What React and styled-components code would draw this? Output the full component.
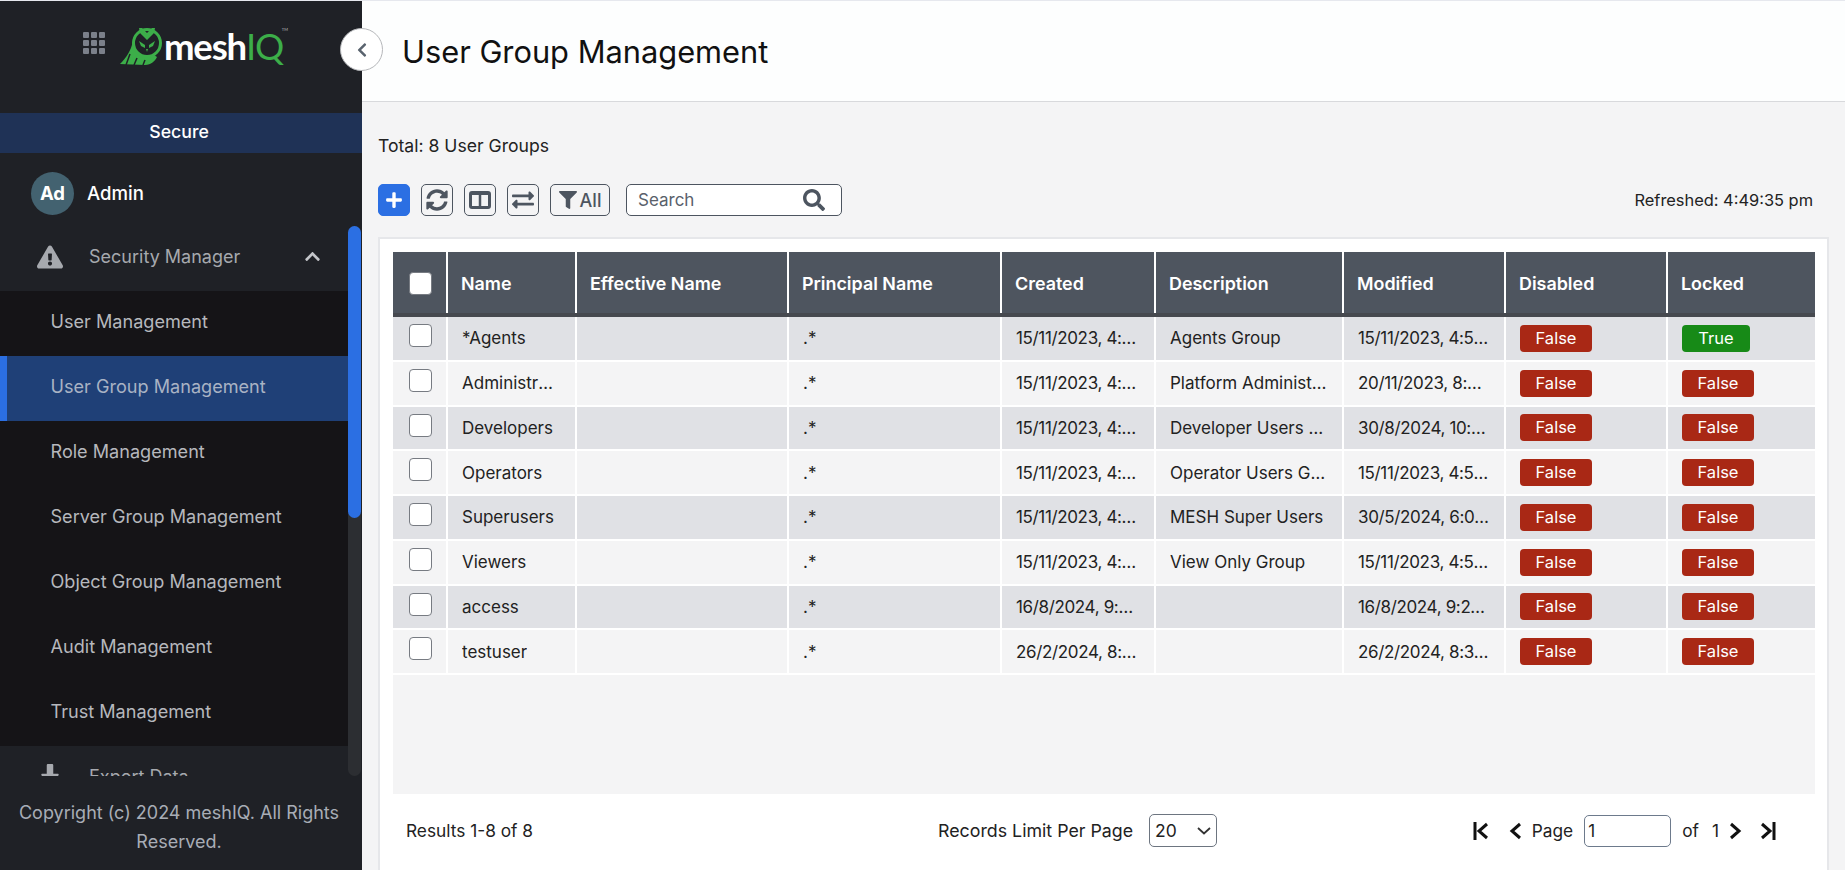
import React from 'react';
import styled, { createGlobalStyle } from 'styled-components';
import {
  FaPlus,
  FaSyncAlt,
  FaExchangeAlt,
  FaFilter,
  FaSearch,
  FaExclamationTriangle,
  FaChevronUp,
  FaChevronLeft,
  FaDownload,
} from 'react-icons/fa';

const GRID = '55px 129px 212px 213px 154px 188px 162px 162px 146px';

const menuItems = [
  'User Management',
  'User Group Management',
  'Role Management',
  'Server Group Management',
  'Object Group Management',
  'Audit Management',
  'Trust Management',
];

const columns = ['Name', 'Effective Name', 'Principal Name', 'Created', 'Description', 'Modified', 'Disabled', 'Locked'];

const rows = [
  { name: '*Agents', created: '15/11/2023, 4:53:21 pm', desc: 'Agents Group', modified: '15/11/2023, 4:53:21 pm', locked: true },
  { name: 'Administrators', created: '15/11/2023, 4:53:21 pm', desc: 'Platform Administrators', modified: '20/11/2023, 8:42:40 am' },
  { name: 'Developers', created: '15/11/2023, 4:53:21 pm', desc: 'Developer Users Group', modified: '30/8/2024, 10:21:05 am' },
  { name: 'Operators', created: '15/11/2023, 4:53:21 pm', desc: 'Operator Users Group', modified: '15/11/2023, 4:53:21 pm' },
  { name: 'Superusers', created: '15/11/2023, 4:53:21 pm', desc: 'MESH Super Users', modified: '30/5/2024, 6:02:11 pm' },
  { name: 'Viewers', created: '15/11/2023, 4:53:21 pm', desc: 'View Only Group', modified: '15/11/2023, 4:53:21 pm' },
  { name: 'access', created: '16/8/2024, 9:24:33 am', desc: '', modified: '16/8/2024, 9:24:33 am' },
  { name: 'testuser', created: '26/2/2024, 8:31:17 pm', desc: '', modified: '26/2/2024, 8:31:17 pm' },
];

const Global = createGlobalStyle`
  html, body {
    margin: 0;
    padding: 0;
    height: 100%;
    overflow: hidden;
  }
  body {
    font-family: Inter, "Liberation Sans", sans-serif;
    background: #f4f4f5;
  }
`;

const Page = styled.div`
  display: flex;
  height: 870px;
  border-top: 1px solid #e6e8ee;
  box-sizing: border-box;
  position: relative;
`;

const Sidebar = styled.aside`
  width: 362px;
  flex: none;
  display: flex;
  flex-direction: column;
  background: #1f2126;
`;

const LogoBar = styled.div`
  height: 112px;
  flex: none;
  display: flex;
  align-items: flex-start;
  padding: 26px 0 0 83px;
  box-sizing: border-box;
`;

const AppGrid = styled.div`
  display: grid;
  grid-template-columns: repeat(3, 6px);
  grid-auto-rows: 6px;
  gap: 2px;
  margin: 5px 14px 0 0;
  span {
    background: #7b808a;
    border-radius: 1px;
  }
`;

const LogoText = styled.div`
  display: flex;
  align-items: baseline;
  margin-left: 1px;
  font-size: 36.5px;
  line-height: 38px;
  font-weight: 700;
  letter-spacing: -1.2px;
  color: #fff;
  font-family: Lato, sans-serif;
  position: relative;
  b {
    font-weight: 400;
    color: #3cae49;
  }
  sup {
    position: absolute;
    right: -5px;
    top: 1px;
    font-size: 4px;
    line-height: 4px;
    letter-spacing: 0;
    font-weight: 400;
    color: #bbb;
  }
`;

const EnvBar = styled.div`
  height: 40px;
  flex: none;
  box-sizing: border-box;
  background: #1f3256;
  color: #fff;
  display: flex;
  align-items: center;
  justify-content: center;
  padding: 0 4px 4px 0;
  font-size: 17.7px;
  font-weight: 500;
`;

const MenuArea = styled.div`
  flex: 1;
  min-height: 0;
  overflow: hidden;
  position: relative;
  padding-right: 14px;
`;

const UserRow = styled.div`
  height: 73px;
  box-sizing: border-box;
  display: flex;
  align-items: center;
  padding: 7px 0 0 31px;
  gap: 13px;
  color: #fff;
  font-size: 18.6px;
  font-weight: 500;
`;

const UserName = styled.span`
  padding-bottom: 1px;
`;

const Avatar = styled.div`
  width: 43px;
  height: 43px;
  border-radius: 50%;
  background: #436270;
  color: #fff;
  font-weight: 700;
  font-size: 18.5px;
  display: flex;
  align-items: center;
  justify-content: center;
`;

const SectionRow = styled.div`
  height: 65px;
  box-sizing: border-box;
  display: flex;
  align-items: center;
  color: #a6a9ae;
  font-size: 18px;
  padding: 0 0 4px 37px;
  svg:first-child {
    width: 26px;
    height: 26px;
    margin-right: 26px;
    flex: none;
  }
`;

const SectionChevron = styled(FaChevronUp)`
  margin-left: auto;
  margin-right: 27px;
  font-size: 17px;
  color: #c4c6ca;
`;

const SubMenu = styled.nav`
  background: #151417;
`;

const MenuItem = styled.div`
  height: 65px;
  display: flex;
  align-items: center;
  box-sizing: border-box;
  padding: 0 0 6px ${(p) => (p.$active ? '43.5px' : '50.5px')};
  font-size: 18.1px;
  color: ${(p) => (p.$active ? '#a9b3c4' : '#b6b8bd')};
  background: ${(p) => (p.$active ? '#1f4077' : 'transparent')};
  border-left: ${(p) => (p.$active ? '7px solid #2b6fe3' : 'none')};
`;

const ScrollTrack = styled.div`
  position: absolute;
  right: 1px;
  top: 73px;
  bottom: 0;
  width: 13px;
  border-radius: 7px;
  background: #2c2e32;
`;

const ScrollThumb = styled.div`
  height: 292px;
  border-radius: 7px;
  background: #2b6fe3;
`;

const SideFooter = styled.div`
  height: 94px;
  flex: none;
  box-sizing: border-box;
  padding: 22px 8px 0 4px;
  text-align: center;
  color: #a8adb6;
  font-size: 18px;
  line-height: 29px;
`;

const Main = styled.main`
  flex: 1;
  min-width: 0;
  display: flex;
  flex-direction: column;
`;

const TopBar = styled.header`
  height: 101px;
  flex: none;
  box-sizing: border-box;
  background: #fdfefe;
  border-bottom: 1px solid #d8d9dc;
  display: flex;
  align-items: center;
  padding-left: 40px;
`;

const Title = styled.h1`
  margin: 0;
  font-size: 30.8px;
  font-weight: 400;
  color: #111;
`;

const BackButton = styled.button`
  position: absolute;
  left: 340px;
  top: 27px;
  width: 43px;
  height: 43px;
  padding: 0;
  border-radius: 50%;
  border: 1px solid #b5b7ba;
  background: #fff;
  color: #59636e;
  display: flex;
  align-items: center;
  justify-content: center;
  font-size: 16px;
`;

const Content = styled.div`
  flex: 1;
  min-height: 0;
  display: flex;
  flex-direction: column;
  padding: 34px 16px 0;
`;

const Total = styled.div`
  font-size: 17.6px;
  line-height: 20px;
  color: #222;
`;

const Toolbar = styled.div`
  display: flex;
  align-items: center;
  margin-top: 28px;
  height: 32px;
`;

const IconButton = styled.button`
  height: 32px;
  min-width: ${(p) => (p.$wide ? '60px' : '32px')};
  box-sizing: border-box;
  padding: 0;
  margin-right: 11px;
  border-radius: 5px;
  border: 1px solid ${(p) => (p.$primary ? '#2b6fe3' : '#4d5560')};
  background: ${(p) => (p.$primary ? '#2b6fe3' : 'transparent')};
  color: ${(p) => (p.$primary ? '#fff' : '#4d5560')};
  display: flex;
  align-items: center;
  justify-content: center;
  gap: 3px;
  font: 500 18px Inter, sans-serif;
  svg {
    font-size: ${(p) => (p.$wide || p.$primary ? '18px' : '22px')};
  }
`;

const ColumnsIcon = () => (
  <svg width="22" height="20" viewBox="0 0 22 20" fill="none" stroke="currentColor" strokeWidth="3">
    <rect x="1.5" y="2.5" width="19" height="15" rx="1.5" />
    <path d="M11 3v14" strokeWidth="2.5" />
    <path d="M2 3.5h18" strokeWidth="3" />
  </svg>
);

const SearchBox = styled.div`
  width: 216px;
  height: 32px;
  box-sizing: border-box;
  margin-left: 5px;
  border: 1px solid #4d5560;
  border-radius: 5px;
  background: #fff;
  display: flex;
  align-items: center;
  padding: 0 16px 0 11px;
  color: #4d5560;
  svg {
    font-size: 22px;
    flex: none;
  }
`;

const SearchInput = styled.input`
  flex: 1;
  min-width: 0;
  border: none;
  outline: none;
  padding: 0;
  background: transparent;
  font: 17px Inter, sans-serif;
  &::placeholder {
    color: #59616b;
  }
`;

const Refreshed = styled.div`
  margin-left: auto;
  margin-right: 16px;
  font-size: 16.4px;
  color: #222;
`;

const Card = styled.section`
  flex: 1;
  min-height: 0;
  margin-top: 21px;
  background: #fff;
  border: 2px solid #e6e7ea;
  border-bottom: none;
  box-sizing: border-box;
  padding: 13px 12px 0 13px;
  display: flex;
  flex-direction: column;
`;

const TableArea = styled.div`
  height: 542px;
  flex: none;
  background: #f4f4f5;
`;

const HeadRow = styled.div`
  display: grid;
  grid-template-columns: ${GRID};
  height: 65px;
  background: #4e555f;
  border-bottom: 4px solid #46494f;
  box-sizing: border-box;
`;

const HeadCell = styled.div`
  display: flex;
  align-items: center;
  box-sizing: border-box;
  padding-left: 13px;
  padding-top: 2px;
  color: #fff;
  font-size: 17.9px;
  font-weight: 600;
  border-right: 2px solid #fff;
  &:last-child {
    border-right: none;
  }
`;

const BodyRow = styled.div`
  display: grid;
  grid-template-columns: ${GRID};
  height: 44.75px;
  box-sizing: border-box;
  border-bottom: 2px solid #fff;
  background: ${(p) => (p.$odd ? '#e0e1e5' : '#f4f4f5')};
`;

const BodyCell = styled.div`
  min-width: 0;
  box-sizing: border-box;
  padding: 0 14px 0;
  border-right: 2px solid #fff;
  display: flex;
  align-items: center;
  font-size: 17px;
  color: #222;
  &:last-child {
    border-right: none;
  }
`;

const CellText = styled.span`
  min-width: 0;
  overflow: hidden;
  white-space: nowrap;
  text-overflow: ellipsis;
`;

const DateText = styled(CellText)`
  letter-spacing: -0.35px;
`;

const CheckCell = styled(BodyCell)`
  align-items: flex-start;
  padding: 7px 0 0 16px;
`;

const HeadCheckCell = styled(HeadCell)`
  padding: 2px 0 0 16px;
`;

const Check = styled.input.attrs({ type: 'checkbox' })`
  appearance: none;
  margin: 0;
  width: 23px;
  height: 23px;
  background: #fff;
  border: 1px solid #777b82;
  border-radius: 4px;
`;

const Flag = styled.span`
  display: inline-flex;
  align-items: center;
  justify-content: center;
  width: ${(p) => (p.$on ? '68px' : '72px')};
  height: 27px;
  padding-bottom: 1px;
  box-sizing: border-box;
  border-radius: 4px;
  background: ${(p) => (p.$on ? '#178a17' : '#a92815')};
  color: #fff;
  font-size: 16.5px;
`;

const Pager = styled.div`
  flex: 1;
  display: flex;
  align-items: center;
  font-size: 17.3px;
  color: #222;
  padding: 0 0 3px 13px;
`;

const LimitGroup = styled.div`
  display: flex;
  align-items: center;
  gap: 16px;
  margin-left: 405px;
  font-size: 17.8px;
`;

const LimitSelect = styled.select`
  appearance: none;
  width: 68px;
  height: 33px;
  box-sizing: border-box;
  border: 1px solid #6d7580;
  border-radius: 5px;
  background: #fff url("data:image/svg+xml,%3Csvg xmlns='http://www.w3.org/2000/svg' width='14' height='8' viewBox='0 0 14 8'%3E%3Cpath d='M1 1l6 5.5L13 1' fill='none' stroke='%23333' stroke-width='1.8'/%3E%3C/svg%3E") no-repeat right 5px center;
  font: 17.5px Inter, sans-serif;
  color: #222;
  padding-left: 5px;
`;

const PageNav = styled.div`
  display: flex;
  align-items: center;
  margin-left: auto;
  margin-right: 39px;
`;

const PageIcon = styled.svg`
  width: 16px;
  height: 18px;
  margin: ${(p) => p.$margin};
  fill: none;
  stroke: #111;
  stroke-width: 3;
  flex: none;
`;

const PageInput = styled.input`
  width: 87px;
  height: 32px;
  box-sizing: border-box;
  margin: 0 11px 0 11px;
  padding: 0 3px;
  border: 1px solid #6d7a8c;
  border-radius: 5px;
  background: #fff;
  font: 17px Inter, sans-serif;
  color: #222;
`;

const OfGap = styled.span`
  width: 13px;
`;

const OwlLogo = () => (
  <svg width="44" height="38" viewBox="0 0 44 38">
    <path d="M14 14C12 24 7 31 1 37l25 1c6 0 10-4 12-8z" fill="#3cae49" />
    <path d="M11 27l-4 11M18 31l-3 7M26 33l-2 5" stroke="#1f2126" strokeWidth="1.5" />
    <circle cx="28" cy="16" r="13.5" fill="#1f2126" stroke="#3cae49" strokeWidth="3" />
    <path d="M20 1l3 0 5 5 5-5 3 0-1 5-7 7-7-7z" fill="#3cae49" />
    <path d="M20 14l6 4v3l-4-2zM36 14l-6 4v3l4-2z" fill="#3cae49" />
    <path d="M27 22h2l-1 3z" fill="#3cae49" />
  </svg>
);

const App = () => (
  <Page>
    <Global />
    <Sidebar>
      <LogoBar>
        <AppGrid>
          {Array.from({ length: 9 }, (_, i) => (
            <span key={i} />
          ))}
        </AppGrid>
        <OwlLogo />
        <LogoText>
          mesh<b>IQ</b>
          <sup>TM</sup>
        </LogoText>
      </LogoBar>
      <EnvBar>Secure</EnvBar>
      <MenuArea>
        <UserRow>
          <Avatar>Ad</Avatar>
          <UserName>Admin</UserName>
        </UserRow>
        <SectionRow>
          <FaExclamationTriangle />
          Security Manager
          <SectionChevron />
        </SectionRow>
        <SubMenu>
          {menuItems.map((item, i) => (
            <MenuItem key={item} $active={i === 1}>
              {item}
            </MenuItem>
          ))}
        </SubMenu>
        <SectionRow>
          <FaDownload />
          Export Data
        </SectionRow>
        <ScrollTrack>
          <ScrollThumb />
        </ScrollTrack>
      </MenuArea>
      <SideFooter>Copyright (c) 2024 meshIQ. All Rights Reserved.</SideFooter>
    </Sidebar>
    <BackButton>
      <FaChevronLeft />
    </BackButton>
    <Main>
      <TopBar>
        <Title>User Group Management</Title>
      </TopBar>
      <Content>
        <Total>Total: 8 User Groups</Total>
        <Toolbar>
          <IconButton $primary>
            <FaPlus />
          </IconButton>
          <IconButton>
            <FaSyncAlt />
          </IconButton>
          <IconButton>
            <ColumnsIcon />
          </IconButton>
          <IconButton>
            <FaExchangeAlt />
          </IconButton>
          <IconButton $wide>
            <FaFilter />
            All
          </IconButton>
          <SearchBox>
            <SearchInput placeholder="Search" />
            <FaSearch />
          </SearchBox>
          <Refreshed>Refreshed: 4:49:35 pm</Refreshed>
        </Toolbar>
        <Card>
          <TableArea>
            <HeadRow>
              <HeadCheckCell>
                <Check />
              </HeadCheckCell>
              {columns.map((c) => (
                <HeadCell key={c}>{c}</HeadCell>
              ))}
            </HeadRow>
            {rows.map((r, i) => (
              <BodyRow key={r.name} $odd={i % 2 === 0}>
                <CheckCell>
                  <Check />
                </CheckCell>
                <BodyCell>
                  <CellText>{r.name}</CellText>
                </BodyCell>
                <BodyCell />
                <BodyCell>
                  <CellText>.*</CellText>
                </BodyCell>
                <BodyCell>
                  <DateText>{r.created}</DateText>
                </BodyCell>
                <BodyCell>
                  <CellText>{r.desc}</CellText>
                </BodyCell>
                <BodyCell>
                  <DateText>{r.modified}</DateText>
                </BodyCell>
                <BodyCell>
                  <Flag>False</Flag>
                </BodyCell>
                <BodyCell>
                  <Flag $on={r.locked}>{r.locked ? 'True' : 'False'}</Flag>
                </BodyCell>
              </BodyRow>
            ))}
          </TableArea>
          <Pager>
            Results 1-8 of 8
            <LimitGroup>
              Records Limit Per Page
              <LimitSelect defaultValue="20">
                <option>10</option>
                <option>20</option>
                <option>50</option>
              </LimitSelect>
            </LimitGroup>
            <PageNav>
              <PageIcon viewBox="0 0 16 18" $margin="0 18px 0 0">
                <path d="M2 0v18M14 2L6 9l8 7" />
              </PageIcon>
              <PageIcon viewBox="0 0 16 18" $margin="0 9px 0 0">
                <path d="M13 2L5 9l8 7" />
              </PageIcon>
              Page
              <PageInput defaultValue="1" />
              of
              <OfGap />1
              <PageIcon viewBox="0 0 16 18" $margin="0 0 0 9px">
                <path d="M3 2l8 7-8 7" />
              </PageIcon>
              <PageIcon viewBox="0 0 16 18" $margin="0 0 0 16px">
                <path d="M14 0v18M2 2l8 7-8 7" />
              </PageIcon>
            </PageNav>
          </Pager>
        </Card>
      </Content>
    </Main>
  </Page>
);

export default App;
